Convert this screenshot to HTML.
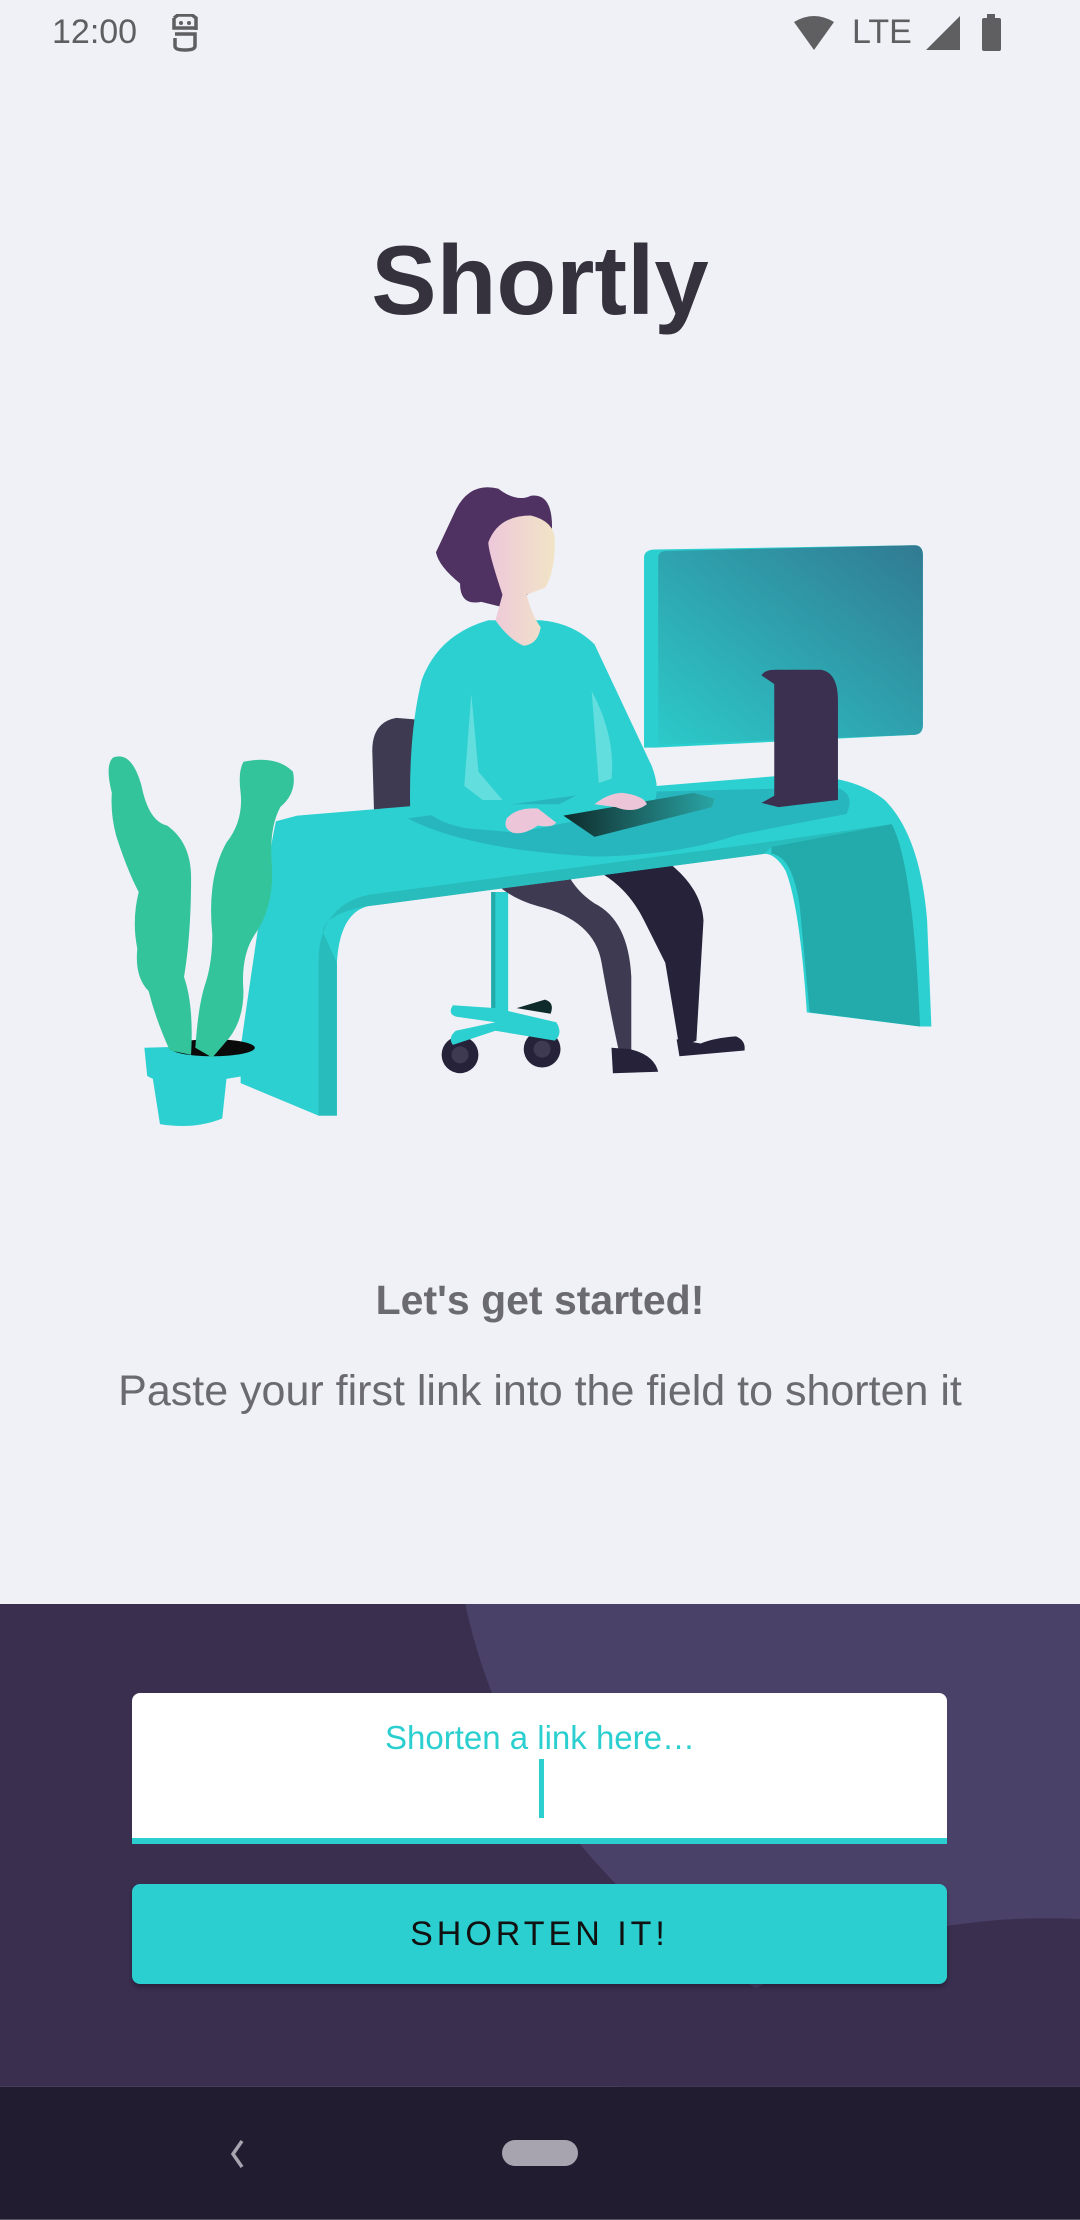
<!DOCTYPE html>
<html><head><meta charset="utf-8"><style>
*{margin:0;padding:0;box-sizing:border-box}
html,body{width:1080px;height:2220px;overflow:hidden}
body{background:#f0f1f6;position:relative;font-family:"Liberation Sans",sans-serif}
.a{position:absolute}
</style></head><body>
<div class="a" style="left:52px;top:12px;font-size:34px;color:#5f5f62;line-height:40px">12:00</div>
<svg class="a" style="left:170px;top:14px" width="30" height="38" viewBox="0 0 30 38"><path d="M4 4 L8 1 L22 1 L26 4 L26 16 M4 4 L4 14 L25 14 M5 20 L25 20 L25 32 Q25 36 15 36 Q5 36 5 32 L5 24" fill="none" stroke="#5f5f62" stroke-width="3.5"/><circle cx="11" cy="9" r="2" fill="#5f5f62"/><circle cx="19" cy="9" r="2" fill="#5f5f62"/></svg>
<svg class="a" style="left:792px;top:14px" width="44" height="38" viewBox="0 0 44 38"><path d="M2 8 Q22 -4 42 8 L22 36 Z" fill="#5f5f62"/></svg>
<div class="a" style="left:852px;top:12px;font-size:34px;color:#5f5f62;line-height:40px">LTE</div>
<svg class="a" style="left:926px;top:14px" width="36" height="38" viewBox="0 0 36 38"><path d="M34 2 L34 36 L0 36 Z" fill="#5f5f62"/></svg>
<svg class="a" style="left:980px;top:14px" width="24" height="38" viewBox="0 0 24 38"><rect x="7" y="0" width="8" height="4" fill="#5f5f62"/><rect x="2" y="4" width="19" height="33" rx="2" fill="#5f5f62"/></svg>

<div class="a" style="left:0;width:1080px;top:222px;text-align:center;font-size:98px;font-weight:bold;color:#35323e;letter-spacing:0px;line-height:116px">Shortly</div>

<svg class="a" style="left:0;top:0" width="1080" height="2220" viewBox="0 0 763 1568">
<defs>
<linearGradient id="mon" x1="0" y1="1" x2="1" y2="0"><stop offset="0" stop-color="#2ccaca"/><stop offset="1" stop-color="#317a92"/></linearGradient>
<linearGradient id="face" x1="0" x2="1"><stop offset="0" stop-color="#eec8da"/><stop offset="1" stop-color="#f1e4c6"/></linearGradient>
<linearGradient id="kb" x1="0" x2="1"><stop offset="0" stop-color="#0f2a2a"/><stop offset="1" stop-color="#2aa5a5"/></linearGradient>
</defs>
<!-- monitor -->
<path d="M455 394 Q455 388 463 388 L646 385 Q652 385 652 392 L652 512 Q652 519 645 519 L463 528 L455 528 Z" fill="#2ccfcf"/>
<path d="M465 394 Q465 389 471 389 L646 385 Q652 385 652 392 L652 512 Q652 519 645 519 L465 526 Z" fill="url(#mon)"/>
<!-- chair back -->
<path d="M280 507 Q263 510 263 530 L265 600 L292 598 L293 508 Z" fill="#3e3a52"/>
<!-- chair -->
<rect x="347" y="630" width="12" height="90" fill="#2dd0d0"/>
<rect x="347" y="630" width="3" height="88" fill="#23abab"/>
<circle cx="325" cy="745" r="13" fill="#25223a"/><circle cx="325" cy="745" r="6" fill="#3e3a52"/>
<circle cx="383" cy="741" r="13" fill="#25223a"/><circle cx="383" cy="741" r="6" fill="#3e3a52"/>
<path d="M365 712 L385 706 Q392 708 389 716 Z" fill="#0f2a2a"/>
<path d="M320 710 Q316 716 322 718 L350 722 L322 728 Q316 733 320 738 L350 728 L392 735 Q398 730 393 722 L350 712 Z" fill="#2dd0d0"/>
<!-- legs (behind desk) -->
<path d="M335 600 Q345 630 380 640 Q420 650 425 680 Q432 720 440 755 L446 755 L446 690 Q444 650 420 638 Q400 625 395 600 Z" fill="#3e3a52"/>
<path d="M410 595 L455 598 Q495 620 497 650 L492 735 L480 740 L470 680 L455 650 Q440 620 410 610 Z" fill="#25223a"/>
<path d="M432 740 L445 741 Q462 745 465 757 L433 758 Z" fill="#25223a"/>
<path d="M478 734 L495 737 Q505 733 520 732 Q527 735 526 742 L480 746 Z" fill="#25223a"/>
<!-- torso -->
<path d="M345 438 Q310 448 298 480 Q288 520 290 580 L460 570 Q468 560 460 540 L420 455 Q405 440 382 438 Z" fill="#2dd0d0"/>
<!-- desk -->
<path d="M195 580 L210 576 L550 548 Q600 545 625 565 Q650 590 655 650 L658 725 L650 725 L570 715 Q565 640 555 615 Q548 603 540 603 L260 640 Q240 645 238 680 L238 788 L225 788 L170 765 L170 740 Q190 600 195 580 Z" fill="#2dd0d0"/>
<path d="M545 603 Q560 605 565 640 L572 715 L650 725 Q645 610 630 582 L545 598 Z" fill="#23abab"/>
<path d="M228 658 Q230 645 260 640 L540 603 L545 598 L630 582 L540 595 L260 632 Q225 640 225 680 L225 788 L238 788 L238 680 Z" fill="#28bcbc"/>
<path d="M288 578 Q330 600 420 605 Q480 604 520 590 Q570 580 598 575 Q605 560 590 556 L420 560 Z" fill="#28b6be"/>
<!-- monitor stand -->
<path d="M538 477 Q540 473 548 473 L580 473 Q592 475 592 495 L592 565 L550 570 L538 567 L547 562 L547 483 Z" fill="#3b3050"/>
<!-- arms over desk -->
<path d="M292 560 Q300 580 330 585 L365 588 L395 582 L460 570 Q468 560 460 540 L440 545 L395 568 L340 568 Z" fill="#2dd0d0"/>
<path d="M333 490 L328 555 L341 565 L355 565 L338 545 Z" fill="#63dede"/>
<path d="M418 488 L423 553 L432 550 Q435 520 418 488 Z" fill="#63dede"/>
<!-- head -->
<path d="M322 360 Q332 340 352 345 Q365 355 375 350 Q390 348 390 372 L385 410 L360 430 L340 425 Q325 428 325 412 Q310 400 308 390 Q315 375 322 360 Z" fill="#4f3262"/>
<path d="M345 383 Q352 364 375 364 Q392 368 392 382 Q392 405 385 415 L372 420 Q376 435 382 443 Q380 455 370 456 Q360 452 350 438 L355 420 Q345 390 345 383 Z" fill="url(#face)"/>
<!-- keyboard & hands -->
<path d="M398 576 L490 560 L505 564 L503 570 L420 591 Z" fill="url(#kb)"/>
<path d="M358 578 Q365 570 380 571 L393 581 Q390 585 380 583 Q370 590 362 588 Q355 585 358 578 Z" fill="#ecc5d8"/>
<path d="M420 568 Q430 560 440 560 Q455 562 457 568 Q448 575 435 570 Z" fill="#ecc5d8"/>
<!-- plant -->
<path d="M102 740 L172 738 L172 760 L160 762 L157 790 Q137 798 113 794 L108 762 L104 760 Z" fill="#2dd0d0"/>
<ellipse cx="150" cy="740" rx="30" ry="6" fill="#0a0a0a"/>
<path d="M80 535 Q93 530 100 555 Q105 580 118 583 Q135 595 135 620 Q135 660 130 690 Q137 710 135 745 L120 742 Q110 720 105 700 Q95 690 97 670 Q93 650 98 630 Q90 615 82 590 Q78 575 79 560 Q74 540 80 535 Z" fill="#33c49b"/>
<path d="M172 538 Q195 533 207 545 Q210 560 198 570 Q190 585 192 610 Q194 640 180 660 Q170 675 172 700 Q172 720 162 733 L150 747 L138 740 Q140 710 145 695 Q150 680 150 660 Q146 620 160 595 Q172 580 170 560 Q168 545 172 538 Z" fill="#33c49b"/>
<!-- bottom section -->
<rect x="0" y="1133" width="763" height="341" fill="#3b2f50"/>
<clipPath id="cl"><rect x="0" y="1133" width="763" height="341"/></clipPath>
<g clip-path="url(#cl)">
<circle cx="720" cy="1050" r="400" fill="#4a4169"/>
<ellipse cx="740" cy="1700" rx="400" ry="345" fill="#3b2f50"/>
</g>
<rect x="0" y="1474" width="763" height="94" fill="#211c30"/>
</svg>

<div class="a" style="left:0;width:1080px;top:1276px;text-align:center;font-size:41px;font-weight:bold;color:#6b6a70;line-height:48px">Let's get started!</div>
<div class="a" style="left:0;width:1080px;top:1366px;text-align:center;font-size:43px;color:#6b6a70;line-height:50px;white-space:nowrap">Paste your first link into the field to shorten it</div>

<div class="a" style="left:132px;top:1693px;width:815px;height:151px;background:#fff;border-radius:8px 8px 0 0;border-bottom:6px solid #2ccfcf"></div>
<div class="a" style="left:0;width:1080px;top:1718px;text-align:center;font-size:33px;color:#2ccfcf;line-height:40px">Shorten a link here…</div>
<div class="a" style="left:539px;top:1759px;width:5px;height:59px;background:#2ccfcf"></div>
<div class="a" style="left:132px;top:1884px;width:815px;height:100px;background:#2bcfcf;border-radius:8px;box-shadow:0 3px 5px rgba(0,0,0,.3);text-align:center;font-size:34px;letter-spacing:4px;color:#111;line-height:100px">SHORTEN IT!</div>

<svg class="a" style="left:226px;top:2138px" width="24" height="32" viewBox="0 0 24 32"><path d="M16 3 L7 16 L16 29" fill="none" stroke="#a7a4b0" stroke-width="3.5"/></svg>
<div class="a" style="left:502px;top:2140px;width:76px;height:26px;border-radius:13px;background:#a7a4b0"></div>
</body></html>
